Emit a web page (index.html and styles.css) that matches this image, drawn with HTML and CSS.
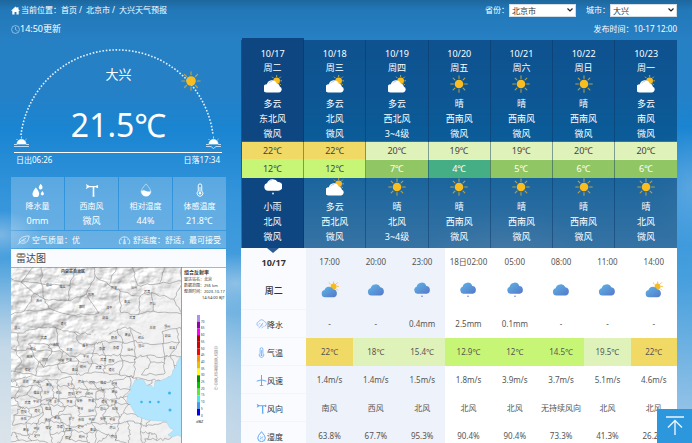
FILE: index.html
```html
<!DOCTYPE html>
<html lang="zh-CN">
<head>
<meta charset="utf-8">
<meta name="viewport" content="width=device-width, initial-scale=1">
<title>大兴天气预报</title>
<link rel="stylesheet" href="styles.css">
</head>
<body>
<svg class="sprite" aria-hidden="true">
  <defs>
    <linearGradient id="blue" x1="0" y1="0" x2="1" y2="1"><stop offset="0" stop-color="#5fb6e8"/><stop offset="1" stop-color="#5577c8"/></linearGradient>
    <symbol id="sun" viewBox="0 0 20 20"><g stroke="#b5a14c" stroke-width="1.2" stroke-linecap="round"><path d="M10 .8v3M10 16.2v3M.8 10h3M16.2 10h3M3.5 3.5l2 2M14.5 14.5l2 2M3.5 16.5l2-2M14.5 5.5l2-2"/></g><circle cx="10" cy="10" r="4.8" fill="#f9bd20"/></symbol>
    <symbol id="cloudsun" viewBox="1 1 18.500 18.500"><g stroke="#c2a548" stroke-width="1" stroke-linecap="round"><path d="M14 1.2v1.6M19.5 7h-1.400M9.5 3l1 1M18 3l-1 1M18 11l-1-1"/></g><circle cx="14" cy="7" r="3.4" fill="#f7bb22"/><path d="M4.5 19a4.200 4.200 0 0 1-.6-8.400 5.400 5.400 0 0 1 10.200-.9 3.900 3.900 0 0 1 3.300 3.300 3.200 3.200 0 0 1-.7 6z" fill="#fff"/><path d="M6 9.700q1-2.200 3.4-2.200" fill="none" stroke="#9ab4cc" stroke-width=".6"/></symbol>
    <symbol id="rain" viewBox="1 1 18 18"><path d="M5 13.8a4 4 0 0 1-.9-7.8A6 6 0 0 1 14.8 5 4.2 4.2 0 0 1 15.400 13.800z" fill="#fff"/><path d="M6.500 4.600q1-1.600 2.800-1.800" fill="none" stroke="#9ab4cc" stroke-width=".6"/><circle cx="10" cy="16.500" r="1" fill="#cfe4f8"/></symbol>
    <symbol id="b-cloud" viewBox="0 0 20 20"><path d="M4.800 16.200a4.200 4.200 0 0 1-.8-8.200 5.800 5.800 0 0 1 10.800-1 4.700 4.700 0 0 1 .4 9.200z" fill="url(#blue)"/></symbol>
    <symbol id="b-rain" viewBox="0 0 20 20"><path d="M4.800 14.200a4 4 0 0 1-.8-7.700 5.600 5.600 0 0 1 10.800-1 4.400 4.400 0 0 1 .4 8.700z" fill="url(#blue)"/><circle cx="10" cy="17" r=".9" fill="#6484cc"/></symbol>
    <symbol id="b-cloudsun" viewBox="0 0 20 20"><path d="M14 1v2M19.500 6h-1.500M9 2l1.300 1.300M18.500 1.800l-1.300 1.300M18.500 10l-1-1" stroke="#f3bd3a" stroke-linecap="round"/><circle cx="14" cy="6" r="3.300" fill="#f7bb22"/><path d="M4.500 18a4 4 0 0 1-.6-7.900 5.200 5.200 0 0 1 9.700-.9 4.500 4.500 0 0 1 .8 8.800z" fill="url(#blue)"/></symbol>
    <symbol id="vane" viewBox="0 0 16 16"><path d="M1 1l5 3-5 3 1-3zM5 3.300h9v1.600H5z" fill="currentColor"/><path d="M14 2.500v3.200M9.700 4.500v10.500" stroke="currentColor" stroke-width="1.800"/><path d="M8.500 15h2.400" stroke="currentColor" stroke-width="1"/></symbol>
    <symbol id="thermo" viewBox="0 0 16 16"><path d="M6 9.200V3a2 2 0 0 1 4 0v6.200a3.300 3.300 0 1 1-4 0z" fill="none" stroke="currentColor" stroke-width="1.100"/><path d="M8 4.500v6" stroke="currentColor"/><circle cx="8" cy="11.800" r="1.400" fill="currentColor"/></symbol>
  </defs>
</svg>

<div class="page">
  <header class="topbar">
    <nav class="crumbs" aria-label="当前位置">
      <svg class="home" viewBox="0 0 16 16" aria-hidden="true"><path d="M8 1L0 8.500h2.300V15h4v-4.500h3.400V15h4V8.500H16l-2.800-2.700V2H11v1.700z" fill="#fff"/></svg>
      <span>当前位置：</span><a href="#">首页</a><span class="sep">/</span><a href="#">北京市</a><span class="sep">/</span><a href="#">大兴天气预报</a>
    </nav>
    <form class="pickers">
      <label for="province">省份：</label>
      <select id="province"><option>北京市</option></select>
      <label class="second" for="city">城市：</label>
      <select id="city"><option>大兴</option></select>
    </form>
  </header>
  <div class="times">
    <p class="updated"><svg viewBox="0 0 16 16" aria-hidden="true"><g fill="none" stroke="#d8eafa"><circle cx="8" cy="8" r="7"/><path d="M8 3.500V8l3.500 2.500"/></g></svg>14:50更新</p>
    <p class="published">发布时间：10-17 12:00</p>
  </div>

  <main class="columns">
    <section class="now">
      <div class="arc">
        <svg class="arc-line" viewBox="0 0 215 112" aria-hidden="true">
          <path d="M10 95A96.700 96.700 0 0 1 202 95" fill="none" stroke="#e4f1fc" stroke-width="1.600" stroke-dasharray="1.600 1.700"/>
          <use href="#sun" x="170" y="31" width="20" height="20"/>
          <g transform="translate(0 1)" fill="#fff" stroke="#fff" stroke-width=".7">
            <path d="M6 103a4.500 4.500 0 0 1 9 0z"/><path d="M3 103.500h3M15 103.500h3M3 105.500h15M10.500 95.500v2M5.500 98l1.200 1.200M15.500 98l-1.200 1.200" fill="none"/>
            <path d="M198 103a4.500 4.500 0 0 1 9 0z"/><path d="M195 103.500h3M207 103.500h3M195 105.500h5l2.500 2 2.500-2h5M202.500 95.500v2M197.500 98l1.200 1.200M207.500 98l-1.200 1.200" fill="none"/>
          </g>
        </svg>
        <div class="reading">
          <h1>大兴</h1>
          <p>21.5℃</p>
        </div>
      </div>
      <div class="sunline"><span>日出06:26</span><span>日落17:34</span></div>

      <ul class="stats">
        <li><svg viewBox="0 0 16 16" aria-hidden="true"><g fill="#fff"><path d="M5.500 5q4.300 5 3.800 7.500a3.800 3.800 0 0 1-7.600 0Q1.500 10 5.500 5z"/><path d="M11 .8q2.500 2.800 2.200 4.400a2.200 2.200 0 0 1-4.400 0Q9 3.500 11 .8z"/><path d="M13 9q2 2.200 1.800 3.700a1.900 1.900 0 0 1-3.700 0Q11.200 11.200 13 9z"/></g></svg><span>降水量</span><b>0mm</b></li>
        <li><svg viewBox="0 0 16 16" aria-hidden="true"><use href="#vane"/></svg><span>西南风</span><b>微风</b></li>
        <li><svg viewBox="0 0 16 16" aria-hidden="true"><path d="M8 1q5.500 6 5.500 9a5.500 5 0 0 1-11 0Q2.500 7 8 1z" fill="none" stroke="#cfe5f7" stroke-width=".8"/><path d="M2.500 9q2.500-1.500 5.500 0t5.500 0a5.500 6 0 0 1-11 .5z" fill="#fff"/></svg><span>相对湿度</span><b>44%</b></li>
        <li><svg viewBox="0 0 16 16" aria-hidden="true"><use href="#thermo"/></svg><span>体感温度</span><b>21.8℃</b></li>
      </ul>
      <div class="comfort">
        <span><svg viewBox="0 0 16 12" aria-hidden="true"><path d="M3 10C2 4 6 1.500 15 1c-1 7-4 10.500-11 8.500M1 11.500Q5 6 11 4M6 7l4.500.3" fill="none" stroke="#e4f1fc" stroke-width="1"/></svg>空气质量：优</span>
        <span><svg viewBox="0 0 16 12" aria-hidden="true"><path d="M3.500 10.500H1.800A6.500 6.500 0 1 1 14.200 10.500h-1.700M8 4.500L7 9.500h2zM8 2v1.200M3.500 5l1 .7M12.500 5l-1 .7M6 10.500h4" fill="none" stroke="#e4f1fc" stroke-width="1"/></svg>舒适度：舒适，最可接受</span>
      </div>

      <h2 class="radar-title">雷达图</h2>
      <svg class="radar" viewBox="0 0 215 176" role="img" aria-label="雷达图">
        <defs>
          <filter id="relief" filterUnits="userSpaceOnUse" x="0" y="0" width="170" height="176" color-interpolation-filters="sRGB">
            <feTurbulence type="fractalNoise" baseFrequency=".07 .1" numOctaves="4" seed="8" result="noise"/>
            <feDiffuseLighting in="noise" surfaceScale="1.600" lighting-color="#fff" diffuseConstant="1.080"><feDistantLight azimuth="225" elevation="58"/></feDiffuseLighting>
          </filter>
          <linearGradient id="plain" x1="0" y1="0" x2=".75" y2="1"><stop offset=".42" stop-color="#f2f2f2" stop-opacity="0"/><stop offset=".62" stop-color="#f2f2f2" stop-opacity=".9"/></linearGradient>
          <clipPath id="frame"><rect width="170" height="176"/></clipPath>
        </defs>
        <rect width="215" height="176" fill="#fff"/>
        <g clip-path="url(#frame)">
          <rect width="170" height="176" fill="#ececec"/>
          <rect width="170" height="176" filter="url(#relief)"/>
          <rect width="170" height="176" fill="url(#plain)"/>
          <g id="counties"></g>
          <path d="M170 89l-4 6-1 5-3 3-1 5-5 3-7 3-5 0-1 8-3-4-4 1-4-7-8 1-2 5-3 2 1 5-3 2-1 7 3 3 3 6 4 6 10 4 13 1 6 0 4 7 4 2-6 5 4 2 6-2 7 4z" fill="#b2e6fe" stroke="#a3cfe2" stroke-width=".5"/>
          <g fill="#3eb5ef"><circle cx="130.500" cy="135" r="1.300"/><circle cx="139" cy="135" r="1.300"/><circle cx="147.500" cy="135" r="1.300"/><circle cx="158.500" cy="126" r="1.500"/><circle cx="159" cy="143" r="1.500"/></g>
          <text x="50" y="6" class="province">内蒙古自治区</text>
        </g>
        <path d="M0 .3h215M170.500 0v176" stroke="#777" stroke-width=".7"/>
        <g class="legend">
          <text x="173" y="7" class="legend-head">组合反射率</text>
          <text x="173" y="14">雷达站名：北京</text>
          <text x="173" y="20">数据范围：256 km</text>
          <text x="173" y="26">观测时间：2023-10-17</text>
          <text x="191" y="32">14:54:00 BJT</text>
          <g id="scale"></g>
          <text x="185" y="156">dBZ</text>
          <text x="204.500" y="79" class="credit">中国气象局雷达气象中心</text>
        </g>
      </svg>
    </section>

    <section class="forecast">
      <table class="week">
        <thead>
          <tr class="r-date"><th class="on">10/17</th><th>10/18</th><th>10/19</th><th>10/20</th><th>10/21</th><th>10/22</th><th>10/23</th></tr>
        </thead>
        <tbody>
          <tr class="r-day"><td class="on">周二</td><td>周三</td><td>周四</td><td>周五</td><td>周六</td><td>周日</td><td>周一</td></tr>
          <tr class="r-icon"><td class="on"><svg><use href="#cloudsun"/></svg></td><td><svg><use href="#cloudsun"/></svg></td><td><svg><use href="#cloudsun"/></svg></td><td><svg><use href="#sun"/></svg></td><td><svg><use href="#sun"/></svg></td><td><svg><use href="#sun"/></svg></td><td><svg><use href="#cloudsun"/></svg></td></tr>
          <tr class="r-text"><td class="on">多云</td><td>多云</td><td>多云</td><td>晴</td><td>晴</td><td>晴</td><td>多云</td></tr>
          <tr class="r-text"><td class="on">东北风</td><td>北风</td><td>西北风</td><td>西南风</td><td>西南风</td><td>西南风</td><td>南风</td></tr>
          <tr class="r-text"><td class="on">微风</td><td>微风</td><td>3~4级</td><td>微风</td><td>微风</td><td>微风</td><td>微风</td></tr>
          <tr class="r-temp"><td class="warm">22℃</td><td class="warm">22℃</td><td class="mild">20℃</td><td class="mild">19℃</td><td class="mild">19℃</td><td class="mild">20℃</td><td class="mild">20℃</td></tr>
          <tr class="r-temp"><td class="cool">12℃</td><td class="cool">12℃</td><td class="chill">7℃</td><td class="cold">4℃</td><td class="chill">5℃</td><td class="chill">6℃</td><td class="chill">6℃</td></tr>
          <tr class="r-icon"><td class="on"><svg><use href="#rain"/></svg></td><td><svg><use href="#cloudsun"/></svg></td><td><svg><use href="#sun"/></svg></td><td><svg><use href="#sun"/></svg></td><td><svg><use href="#sun"/></svg></td><td><svg><use href="#sun"/></svg></td><td><svg><use href="#sun"/></svg></td></tr>
          <tr class="r-text"><td class="on">小雨</td><td>多云</td><td>晴</td><td>晴</td><td>晴</td><td>晴</td><td>晴</td></tr>
          <tr class="r-text"><td class="on">北风</td><td>西北风</td><td>北风</td><td>西南风</td><td>西南风</td><td>西南风</td><td>北风</td></tr>
          <tr class="r-text r-last"><td class="on">微风</td><td>微风</td><td>3~4级</td><td>微风</td><td>微风</td><td>微风</td><td>微风</td></tr>
        </tbody>
      </table>

      <table class="hours">
        <colgroup><col class="c-label"><col span="8"></colgroup>
        <thead>
          <tr class="h-time"><th class="day">10/17</th><th class="near">17:00</th><th class="near">20:00</th><th class="near">23:00</th><th>18日02:00</th><th>05:00</th><th>08:00</th><th>11:00</th><th>14:00</th></tr>
        </thead>
        <tbody>
          <tr class="h-icon"><th class="weekday">周二</th><td class="near"><svg><use href="#b-cloudsun"/></svg></td><td class="near"><svg><use href="#b-cloud"/></svg></td><td class="near"><svg><use href="#b-rain"/></svg></td><td><svg><use href="#b-rain"/></svg></td><td><svg><use href="#b-rain"/></svg></td><td><svg><use href="#b-cloud"/></svg></td><td><svg><use href="#b-cloud"/></svg></td><td><svg><use href="#b-cloudsun"/></svg></td></tr>
          <tr><th><span class="label"><svg viewBox="0 0 16 16"><path d="M4 10.500a3.300 3.300 0 0 1 0-6.500 4.500 4.500 0 0 1 8.400 0 3.300 3.300 0 0 1 0 6.500M4 8l2-2M6.500 9.500l4-4M4 13l6-5M8 13.500l3-3" fill="none" stroke="#8db4f8" stroke-width="1.200"/></svg>降水</span></th><td class="near">-</td><td class="near">-</td><td class="near">0.4mm</td><td>2.5mm</td><td>0.1mm</td><td>-</td><td>-</td><td>-</td></tr>
          <tr><th><span class="label"><svg viewBox="0 0 16 16"><use href="#thermo"/></svg>气温</span></th><td class="warm">22℃</td><td class="mild">18℃</td><td class="mild">15.4℃</td><td class="cool">12.9℃</td><td class="cool">12℃</td><td class="cool">14.5℃</td><td class="mild">19.5℃</td><td class="warm">22℃</td></tr>
          <tr><th><span class="label"><svg viewBox="0 0 16 16"><path d="M8 7V0M8 7L1 9M8 7l7 2M8 7v8.500M5.500 15.500h5" fill="none" stroke="currentColor" stroke-width="1.400"/></svg>风速</span></th><td class="near">1.4m/s</td><td class="near">1.4m/s</td><td class="near">1.5m/s</td><td>1.8m/s</td><td>3.9m/s</td><td>3.7m/s</td><td>5.1m/s</td><td>4.6m/s</td></tr>
          <tr><th><span class="label"><svg viewBox="0 0 16 16"><use href="#vane"/></svg>风向</span></th><td class="near">南风</td><td class="near">西风</td><td class="near">北风</td><td>北风</td><td>北风</td><td>无持续风向</td><td>北风</td><td>北风</td></tr>
          <tr><th><span class="label"><svg viewBox="0 0 16 16"><path d="M8 1q5.500 6 5.500 9.200a5.500 5.200 0 0 1-11 0Q2.500 7 8 1z" fill="none" stroke="currentColor" stroke-width="1.400"/><path d="M5.500 12l5-4M6 8.500h1M9.500 12h1" stroke="currentColor" stroke-width="1.200"/></svg>湿度</span></th><td class="near">63.8%</td><td class="near">67.7%</td><td class="near">95.3%</td><td>90.4%</td><td>90.4%</td><td>73.3%</td><td>41.3%</td><td>26.2%</td></tr>
        </tbody>
      </table>
    </section>
  </main>
</div>
<button class="to-top" type="button" aria-label="返回顶部"><svg viewBox="0 0 18 20" aria-hidden="true"><path d="M0 1h18M9 19V4.500M2 11.500l7-7 7 7" fill="none" stroke="#eaf5fd" stroke-width="1.400"/></svg></button>
<script src="radar.js"></script>
</body>
</html>
```

FILE: styles.css
```css
* { box-sizing: border-box; }

body {
  margin: 0;
  color: #fff;
  font: 8px/12px "Noto Sans", "Noto Sans CJK SC", sans-serif;
}

h1, h2, p, ul { margin: 0; padding: 0; font-weight: 400; }
li { list-style: none; }
a { color: inherit; text-decoration: none; }
svg { display: block; flex: none; }
.sprite { position: absolute; width: 0; height: 0; }

.page {
  height: 100vh;
  padding: 3px 15px 0 11px;
  overflow-y: auto;
  scrollbar-width: none;
  background:
    radial-gradient(ellipse 40px 24px at 0 53%, rgba(150, 195, 232, .7), transparent),
    radial-gradient(ellipse 50px 30px at 34% 64%, rgba(190, 215, 235, .6), transparent),
    radial-gradient(ellipse 80px 50px at 73% 58%, rgba(190, 215, 235, .35), transparent),
    radial-gradient(ellipse 50px 60px at 100% 42%, rgba(130, 185, 230, .5), transparent),
    radial-gradient(ellipse 420px 190px at 0 100%, #dbe4ea 0, rgba(205, 220, 232, .9) 50%, transparent 100%),
    linear-gradient(#1d679e 0, #2278b8 10px, #2780c4 40px, #2580c6 90px, #1a85d2 130px, #3595db 200px, #479fdd 280px, #6fb2e2 350px, #a5cbea 443px);
}

.topbar, .times { display: flex; justify-content: space-between; align-items: center; }
.topbar { height: 14px; }
.crumbs, .pickers { display: flex; align-items: center; }
.home { width: 9px; height: 9px; margin-right: 1px; }
.sep { margin: 0 4px 0 2px; }
.pickers select {
  appearance: none;
  width: 67px;
  height: 13px;
  padding: 0 2px;
  border: 1px solid #d5dde4;
  border-radius: 0;
  color: #333;
  font: inherit;
  line-height: 11px;
  background: #fff url("data:image/svg+xml,%3Csvg xmlns='http://www.w3.org/2000/svg' viewBox='0 0 6 4'%3E%3Cpath d='M.5.5L3 3 5.500.5' fill='none' stroke='%23222' stroke-width='1.200'/%3E%3C/svg%3E") no-repeat right 2px center / 6px 4px;
}
.pickers .second { margin-left: 10px; }

.times { height: 12px; margin-top: 6px; }
.updated { display: flex; align-items: center; font-size: 9px; }
.updated svg { width: 9px; height: 9px; }

.columns { display: grid; grid-template-columns: 215fr 436fr; gap: 15px; align-items: start; padding-top: 5px; }

.arc { display: grid; }
.arc-line { grid-area: 1 / 1; width: 100%; }
.reading { grid-area: 1 / 1; padding-top: 24px; text-align: center; }
.reading h1 { font-size: 13px; line-height: 20px; }
.reading p { padding-top: 21px; font-size: 32px; line-height: 40px; }
.sunline {
  display: flex;
  justify-content: space-between;
  margin: 0 4px 0 3px;
  padding: 1px 2px 0;
  border-top: 1px solid #fff;
}

.stats { display: grid; grid-template-columns: repeat(4, 1fr); gap: 1px; margin-top: 11px; }
.stats li {
  display: flex;
  flex-direction: column;
  align-items: center;
  height: 53px;
  padding-top: 6px;
  background: rgba(255, 255, 255, .22);
}
.stats svg { width: 14px; height: 14px; }
.stats span { margin-top: 3px; }
.stats b { margin-top: 3px; font-size: 9px; font-weight: 400; }
.comfort {
  display: flex;
  justify-content: space-between;
  align-items: center;
  height: 17px;
  margin-top: 1px;
  padding: 0 5px 0 6px;
  background: rgba(255, 255, 255, .22);
}
.comfort span { display: flex; align-items: center; gap: 2px; }
.comfort svg { width: 13px; height: 10px; }
.radar-title {
  margin-top: 1px;
  padding: 0 5px;
  background: #f9fbff;
  color: #444;
  font-size: 10px;
  line-height: 18px;
}
.radar { width: 100%; }
.radar text { fill: #444; font-size: 3px; }
.radar .province { font-size: 4px; font-weight: 700; }
.radar .legend text { fill: #333; font-size: 4px; }
.radar .legend .legend-head { font-size: 5px; font-weight: 700; }
.radar .legend .tick { font-size: 3px; }
.radar .legend .credit { writing-mode: vertical-rl; fill: #888; }

table { width: 100%; border-collapse: collapse; table-layout: fixed; text-align: center; }
th, td { padding: 0; font-weight: 400; }
td svg { margin: 0 auto; }

.week { background: linear-gradient(rgba(4, 62, 122, .7), rgba(4, 76, 130, .72) 50%, rgba(50, 98, 140, .7)); font-size: 9px; }
.week th, .week td { border-left: 1px solid rgba(10, 50, 95, .45); }
.week .on { background: #0e4682; }
.week .on, .week td:first-child { border-left-color: transparent; }
.r-date { height: 21px; }
.r-date th { padding-top: 6px; }
.r-date .on { box-shadow: 0 -2px #0e4682; }
.r-day { height: 14px; }
.r-icon { height: 21px; }
.r-icon td { padding-bottom: 3px; }
.r-icon svg { width: 18px; height: 18px; }
.r-text { height: 15px; }
.r-text td { line-height: 15px; }
.r-last { height: 19px; }
.r-last td { padding-bottom: 3px; }
.r-temp { height: 18px; color: #444; }
.week .r-temp td { border-top: 1px solid rgba(255, 255, 255, .15); }

.warm { background: #f0d965; }
.mild { background: #dff2b9; }
.cool { background: #c7f576; }
.chill { background: #90c764; color: #fff; }
.cold { background: #46ae85; color: #fff; }

.hours { position: relative; background: #fff; color: #555; }
.hours::before {
  content: "";
  position: absolute;
  top: 0;
  left: 26px;
  border: 6px solid transparent;
  border-top: 5px solid #2d5a92;
  border-bottom: 0;
}
.hours .c-label { width: 15%; }
.hours tr { height: 28px; }
.h-time th { padding-top: 1px; }
.hours .h-icon { height: 34px; }
.hours tbody th, .hours .day { background: #f9fbfe; color: #333; border-bottom: 1px solid #f2f5fa; }
.hours .day { padding-top: 2px; font-size: 9px; font-weight: 700; border: 0; }
.hours tbody .weekday { padding-bottom: 3px; font-size: 9px; font-weight: 500; }
.h-icon td { padding-bottom: 5px; }
.h-icon svg { width: 18px; height: 18px; }
.near { background: #edf2fb; }
.label { display: flex; align-items: center; padding: 2px 0 0 15px; }
.label svg { width: 11px; height: 11px; color: #5fa5f3; }

.to-top {
  position: fixed;
  right: 0;
  bottom: 0;
  display: grid;
  place-items: center;
  width: 35px;
  height: 34px;
  padding: 0;
  border: 0;
  background: #2d97dd;
}
.to-top svg { width: 18px; height: 20px; }
```

FILE: radar.js
```js
const NS = "http://www.w3.org/2000/svg";
let seed = 17;
const rnd = () => (seed = (seed * 16807) % 2147483647) / 2147483647;

function add(parent, name, attrs, text) {
  const el = document.createElementNS(NS, name);
  for (const key in attrs) el.setAttribute(key, attrs[key]);
  if (text) el.textContent = text;
  parent.appendChild(el);
}

// County borders: a jittered lattice, wide in the hills and tight on the plain.
const counties = document.getElementById("counties");
const names = ["怀来", "延庆", "昌平", "密云", "平谷", "房山", "涿州", "固安", "霸州", "廊坊", "武清", "蓟州", "遵化", "唐山", "丰润", "易县", "定兴", "保定", "安新", "雄县", "任丘", "河间", "沧州", "青县", "静海", "蔚县", "阳原", "赤城", "丰宁", "滦平", "承德", "兴隆"];

function wobble(a, b) {
  let d = `M${a[0].toFixed(1)} ${a[1].toFixed(1)}`;
  for (let i = 1; i <= 5; i++) {
    const j = i < 5 ? 2.6 : 0;
    d += `L${(a[0] + (b[0] - a[0]) * i / 5 + (rnd() - .5) * j).toFixed(1)} ${(a[1] + (b[1] - a[1]) * i / 5 + (rnd() - .5) * j).toFixed(1)}`;
  }
  return d;
}

function lattice(y0, y1, stepX, stepY) {
  const rows = [];
  for (let y = y0; y <= y1 + 1; y += stepY) {
    const row = [];
    for (let x = -5; x < 182; x += stepX) {
      row.push([x + (rnd() - .5) * stepX * .8, y + (rnd() - .5) * stepY * .7]);
    }
    rows.push(row);
  }
  let d = "";
  rows.forEach((row, r) => row.forEach((p, c) => {
    if (row[c + 1] && rnd() > .15) d += wobble(p, row[c + 1]);
    if (rows[r + 1] && rnd() > .15) d += wobble(p, rows[r + 1][c]);
    // The drift stays small enough that neighbouring names keep apart.
    const x = -5 + (c + .5) * stepX + (rnd() - .5) * (stepX - 7);
    const y = y0 + (r + .6) * stepY + (rnd() - .5) * (stepY - 5);
    const inSea = x > 106 && y > 90;
    if (x > 3 && x < 160 && y > 10 && y < 172 && y < y1 && !inSea && rnd() > .15) {
      add(counties, "text", { x: x.toFixed(1), y: y.toFixed(1) }, names[Math.floor(rnd() * names.length)]);
    }
  }));
  add(counties, "path", { d, fill: "none", stroke: "#7c7c7c", "stroke-width": ".5" });
}

lattice(-4, 62, 22, 17);
lattice(64, 108, 14, 11);
lattice(112, 180, 11, 9);

// Reflectivity scale, strongest echo first.
const scale = document.getElementById("scale");
["#ad90f0", "#9600b4", "#ff00f0", "#c00000", "#d60000", "#ff0000", "#ff9000", "#e7c000", "#ffff00", "#019000", "#00c800", "#62e63c", "#40e8f0", "#3c9ef5", "#0000f6"].forEach((fill, i) => {
  add(scale, "rect", { x: 186, y: 48 + i * 6.7, width: 3, height: 6.7, fill });
  add(scale, "text", { x: 190, y: 48 + (i + 1) * 6.7 + 1, class: "tick" }, String(70 - i * 5));
});
```
